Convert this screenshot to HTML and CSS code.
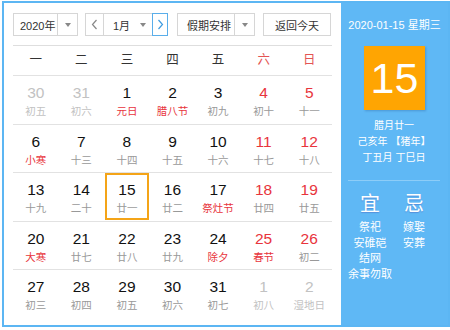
FILE: index.html
```html
<!DOCTYPE html>
<html lang="zh-CN">

<head>
    <meta charset="UTF-8">
    <meta name="viewport" content="width=device-width, initial-scale=1.0">
    <title>万年历</title>
    <link rel="stylesheet" href="styles.css">
</head>

<body>
    <div class="calendar">
        <div class="main">
            <div class="toolbar">
                <div class="select year">
                    <span class="label">2020年</span>
                    <span class="drop"><i class="arrow"></i></span>
                </div>
                <div class="month-group">
                    <button class="nav prev">
                        <svg width="7" height="11" viewBox="0 0 7 11"><polyline points="5.5,1 1.5,5.5 5.5,10" fill="none" stroke="#888" stroke-width="1.2"/></svg>
                    </button>
                    <div class="select month">
                        <span class="label">1月</span>
                        <i class="arrow"></i>
                    </div>
                    <button class="nav next">
                        <svg width="7" height="11" viewBox="0 0 7 11"><polyline points="1.5,1 5.5,5.5 1.5,10" fill="none" stroke="#3d9be0" stroke-width="1.2"/></svg>
                    </button>
                </div>
                <div class="select holiday">
                    <span class="label">假期安排</span>
                    <span class="drop"><i class="arrow"></i></span>
                </div>
                <button class="today-btn">返回今天</button>
            </div>

            <div class="weekdays">
                <span>一</span>
                <span>二</span>
                <span>三</span>
                <span>四</span>
                <span>五</span>
                <span class="weekend">六</span>
                <span class="weekend">日</span>
            </div>

            <div id="weeks"></div>
        </div>

        <div class="side">
            <div class="side-date">2020-01-15 星期三</div>
            <div class="big-day">15</div>
            <div class="lunar">
                <p>腊月廿一</p>
                <p>己亥年 【猪年】</p>
                <p>丁丑月 丁巳日</p>
            </div>
            <div class="yiji">
                <div class="col">
                    <div class="yiji-title">宜</div>
                    <p>祭祀</p>
                    <p>安碓硙</p>
                    <p>结网</p>
                    <p>余事勿取</p>
                </div>
                <div class="col">
                    <div class="yiji-title">忌</div>
                    <p>嫁娶</p>
                    <p>安葬</p>
                </div>
            </div>
        </div>
    </div>

    <script>
        // [day, lunar, flags]  o = other month, h = red lunar (festival), t = today
        const days = [
            [30, '初五', 'o'], [31, '初六', 'o'], [1, '元日', 'h'], [2, '腊八节', 'h'], [3, '初九'], [4, '初十'], [5, '十一'],
            [6, '小寒', 'h'], [7, '十三'], [8, '十四'], [9, '十五'], [10, '十六'], [11, '十七'], [12, '十八'],
            [13, '十九'], [14, '二十'], [15, '廿一', 't'], [16, '廿二'], [17, '祭灶节', 'h'], [18, '廿四'], [19, '廿五'],
            [20, '大寒', 'h'], [21, '廿七'], [22, '廿八'], [23, '廿九'], [24, '除夕', 'h'], [25, '春节', 'h'], [26, '初二'],
            [27, '初三'], [28, '初四'], [29, '初五'], [30, '初六'], [31, '初七'], [1, '初八', 'o'], [2, '湿地日', 'o']
        ];

        let html = '';
        for (let w = 0; w < 5; w++) {
            html += '<div class="week">';
            for (let d = 0; d < 7; d++) {
                const [num, lunar, flag = ''] = days[w * 7 + d];
                let cls = 'day';
                if (flag === 'o') cls += ' other';
                if (flag === 't') cls += ' today';
                if (d >= 5) cls += ' weekend';
                const lunarCls = flag === 'h' ? 'lunar-text festival' : 'lunar-text';
                html += `<div class="${cls}"><span class="num">${num}</span><span class="${lunarCls}">${lunar}</span></div>`;
            }
            html += '</div>';
        }
        document.getElementById('weeks').innerHTML = html;
    </script>
</body>

</html>
```

FILE: styles.css
```css
* {
    box-sizing: border-box;
}

body {
    margin: 0;
    font-family: "Liberation Sans", "Noto Sans CJK SC", sans-serif;
    background-color: #fff;
}

.calendar {
    display: flex;
    width: 448px;
    height: 326px;
    margin: 1px 0 0 2px;
    border: 2px solid #5cb6f3;
}

.main {
    width: 337px;
    padding: 10px 9px 0 9px;
}

/* toolbar */

.toolbar {
    display: flex;
    height: 23px;
    padding-bottom: 9px;
    border-bottom: 1px solid #dedede;
    box-sizing: content-box;
}

.select {
    display: flex;
    align-items: center;
    height: 23px;
    border: 1px solid #d6d6d6;
    font-size: 11px;
    color: #333;
    white-space: nowrap;
}

.select .label {
    flex: 1;
}

.drop {
    display: flex;
    align-items: center;
    justify-content: center;
    width: 20px;
    height: 100%;
    border-left: 1px solid #d6d6d6;
}

.arrow {
    display: inline-block;
    width: 0;
    height: 0;
    border-left: 3px solid transparent;
    border-right: 3px solid transparent;
    border-top: 4px solid #888;
}

.year {
    width: 65px;
}

.year .label {
    padding-left: 6px;
}

.month-group {
    display: flex;
    margin-left: 7px;
}

.nav {
    display: flex;
    align-items: center;
    justify-content: center;
    height: 23px;
    padding: 0;
    border: 1px solid #d6d6d6;
    background-color: #fff;
}

.prev {
    width: 18px;
    border-right: none;
}

.next {
    width: 16px;
    border-color: #5aaeea;
}

.month {
    width: 49px;
    border-right: none;
}

.month .label {
    padding-left: 9px;
}

.month .arrow {
    margin-right: 6px;
}

.holiday {
    width: 78px;
    margin-left: 9px;
}

.holiday .label {
    padding-left: 9px;
}

.today-btn {
    width: 68px;
    height: 23px;
    margin-left: 8px;
    padding: 0;
    border: 1px solid #d6d6d6;
    background-color: #fff;
    font-family: inherit;
    font-size: 11px;
    color: #333;
    white-space: nowrap;
}

/* grid */

.weekdays {
    display: grid;
    grid-template-columns: repeat(7, 1fr);
    height: 29px;
    line-height: 29px;
    text-align: center;
    font-size: 12.5px;
    color: #333;
}

.weekdays .weekend {
    color: #e45454;
}

.week {
    display: grid;
    grid-template-columns: repeat(7, 1fr);
    height: 48.5px;
    border-top: 1px solid #e2e2e2;
}

.day {
    display: flex;
    flex-direction: column;
    align-items: center;
    padding-top: 7px;
}

.num {
    font-size: 15.5px;
    line-height: 20px;
    color: #111;
}

.lunar-text {
    font-size: 10.5px;
    line-height: 16px;
    color: #999;
}

.day.weekend .num {
    color: #e8343c;
}

.festival {
    color: #e8343c;
}

.day.other .num,
.day.other .lunar-text {
    color: #c2c2c2;
}

.today {
    margin: 0 1px 1px 1px;
    outline: 2px solid #f4a418;
    outline-offset: -2px;
}

/* side panel */

.side {
    width: 107px;
    background-color: #5fb8f5;
    color: #fff;
    text-align: center;
}

.side-date {
    margin-top: 14px;
    font-size: 11px;
    line-height: 16px;
}

.big-day {
    width: 61px;
    height: 64px;
    margin: 13px auto 0;
    background-color: #ffa502;
    font-size: 43px;
    line-height: 64px;
    box-shadow: 1px 1px 2px rgba(40, 90, 150, 0.35);
}

.lunar {
    margin: 8px 8px 0 7px;
    padding-bottom: 14px;
    border-bottom: 1px solid #8dcdf8;
}

.lunar p {
    margin: 0;
    font-size: 10px;
    line-height: 16px;
}

.yiji {
    display: flex;
    padding: 11px 7px 0;
}

.yiji .col {
    width: 44px;
}

.yiji-title {
    font-size: 20px;
    line-height: 24px;
    margin-bottom: 4px;
    text-shadow: 0 1px 1px rgba(70, 70, 170, 0.35);
}

.yiji p {
    margin: 0;
    font-size: 11px;
    line-height: 15.5px;
}
```
